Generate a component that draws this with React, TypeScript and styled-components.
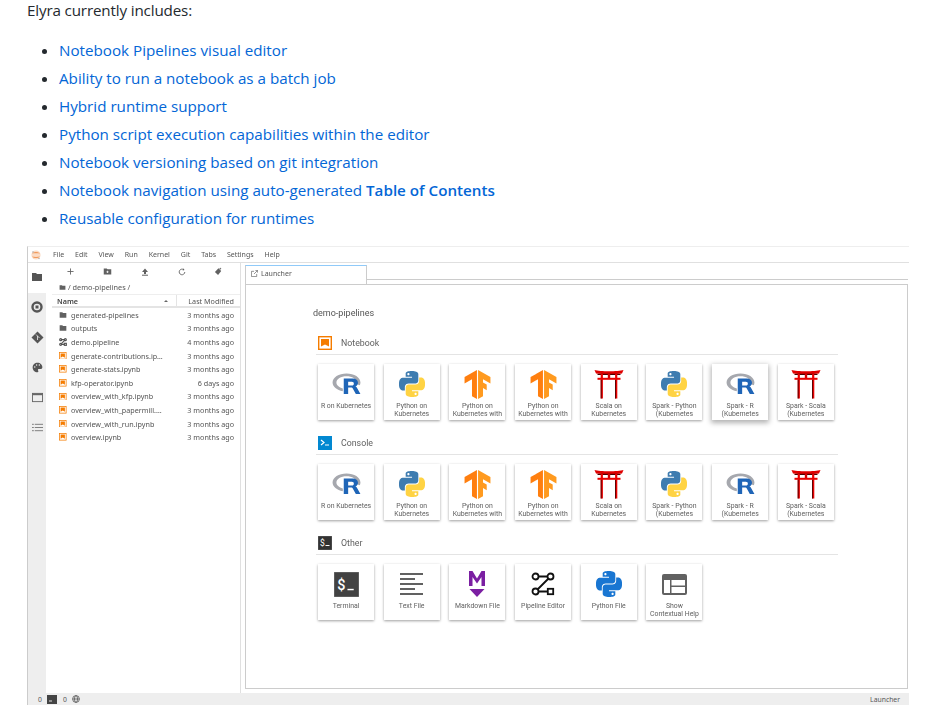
import React from "react";
import styled, { createGlobalStyle } from "styled-components";

const Global = createGlobalStyle`
  html, body { margin: 0; padding: 0; background: #fff; }
  body { font-family: "Open Sans", "Noto Sans", sans-serif; color: #24292e; }
`;

const Page = styled.div`
  width: 932px;
  height: 720px;
  overflow: hidden;
  padding-left: 27px;
  box-sizing: border-box;
`;
const Intro = styled.p`
  margin: 0 0 16px;
  font-size: 15.2px;
  line-height: 20px;
  letter-spacing: -0.15px;
  color: #24292e;
`;
const Features = styled.ul`
  margin: 0 0 14px;
  padding: 0 0 0 32px;
  list-style: disc;
  font-size: 15.2px;
`;
const Feature = styled.li`
  height: 28px;
  line-height: 28px;
  color: #24292e;
  a { color: #0366d6; text-decoration: none; }
  strong { font-weight: 600; }
`;

const Frame = styled.div`
  width: 882px;
  height: 459px;
  display: flex;
  flex-direction: column;
  border-top: 1px solid #eee;
  border-left: 1px solid #ccc;
  box-sizing: border-box;
  filter: blur(0.4px);
  font-family: "Noto Sans", sans-serif;
  color: #555;
`;
const MenuBar = styled.div`
  height: 15px;
  flex: none;
  display: flex;
  align-items: center;
  padding-left: 3px;
  border-bottom: 1px solid #e0e0e0;
  box-sizing: content-box;
  font-size: 7px;
`;
const MenuItems = styled.div`
  display: flex;
  gap: 10.9px;
  margin-left: 12px;
`;
const Body = styled.div`
  flex: 1;
  display: flex;
  min-height: 0;
`;
const SideBar = styled.div`
  width: 18px;
  flex: none;
  background: #eeeeee;
  display: flex;
  flex-direction: column;
`;
const SideButton = styled.div<{ $active?: boolean }>`
  height: 30px;
  box-sizing: border-box;
  padding-bottom: 2px;
  display: flex;
  align-items: center;
  justify-content: center;
  background: ${(p) => (p.$active ? "#fff" : "transparent")};
  color: #555;
`;
const Browser = styled.div`
  width: 195px;
  flex: none;
  border-right: 1px solid #e0e0e0;
  box-sizing: border-box;
  display: flex;
  flex-direction: column;
`;
const BrowserTools = styled.div`
  height: 17px;
  display: grid;
  grid-template-columns: repeat(5, 37px);
  padding-left: 6px;
  align-items: center;
  justify-items: center;
  flex: none;
  color: #616161;
`;
const Crumbs = styled.div`
  height: 14px;
  display: flex;
  align-items: center;
  gap: 2px;
  padding-left: 13px;
  font-size: 7.3px;
  flex: none;
`;
const HeadRow = styled.div`
  height: 14px;
  box-sizing: border-box;
  margin-left: 6px;
  display: flex;
  align-items: center;
  border-top: 1px solid #eee;
  border-bottom: 2px solid #e4e4e4;
  font-size: 7.2px;
  flex: none;
`;
const NameHead = styled.div`
  width: 125px;
  padding-left: 5px;
  box-sizing: border-box;
  font-weight: 600;
  color: #444;
  display: flex;
  align-items: center;
  justify-content: space-between;
  padding-right: 8px;
  border-right: 1px solid #e4e4e4;
  height: 100%;
`;
const DateHead = styled.div`
  flex: 1;
  text-align: right;
  padding-right: 6px;
`;
const Caret = styled.span`
  width: 0;
  height: 0;
  border-left: 2px solid transparent;
  border-right: 2px solid transparent;
  border-bottom: 2px solid #666;
`;
const Rows = styled.div`
  display: flex;
  flex-direction: column;
`;
const Row = styled.div`
  height: 13.6px;
  margin-left: 13px;
  display: flex;
  align-items: center;
  font-size: 7.2px;
`;
const RowIcon = styled.span`
  width: 12px;
  flex: none;
  display: flex;
  align-items: center;
`;
const RowName = styled.span`
  width: 92px;
  overflow: hidden;
  white-space: nowrap;
  text-overflow: ellipsis;
`;
const RowDate = styled.span`
  flex: 1;
  text-align: right;
  padding-right: 6px;
  white-space: nowrap;
`;
const Main = styled.div`
  flex: 1;
  display: flex;
  flex-direction: column;
  padding: 2px 1px 4px 4px;
  min-width: 0;
`;
const TabBar = styled.div`
  height: 19px;
  flex: none;
  display: flex;
`;
const Tab = styled.div`
  width: 122px;
  height: 19px;
  box-sizing: border-box;
  border-top: 1px solid #90caf9;
  border-left: 1px solid #ccc;
  border-right: 1px solid #ccc;
  display: flex;
  align-items: center;
  gap: 3px;
  padding: 0 0 4px 5px;
  font-size: 7px;
`;
const TabRest = styled.div`
  flex: 1;
  height: 14px;
  border-bottom: 1px solid #ccc;
`;
const Panel = styled.div`
  flex: 1;
  border: 1px solid #ccc;
  box-sizing: border-box;
  padding: 22px 0 0 67px;
  font-family: Roboto, sans-serif;
`;
const CwdTitle = styled.div`
  font-size: 9px;
  line-height: 12px;
  color: #555;
`;
const Section = styled.section`
  width: 522px;
  margin: 17px 0 16px 3px;
  & + & { margin-top: 0; }
`;
const SectionHead = styled.div`
  height: 14px;
  display: flex;
  align-items: center;
  gap: 9px;
  padding: 0 0 4px 2px;
  border-bottom: 1px solid #e4e4e4;
  font-size: 8.8px;
  color: #616161;
  box-sizing: content-box;
`;
const Cards = styled.div`
  display: flex;
  gap: 9.7px;
  padding: 9px 0 0 2px;
`;
const Card = styled.div<{ $hover?: boolean }>`
  width: 56px;
  height: 56px;
  flex: none;
  box-sizing: border-box;
  background: #fff;
  display: flex;
  flex-direction: column;
  align-items: center;
  overflow: hidden;
  box-shadow: ${(p) =>
    p.$hover
      ? "0 2px 5px 1px rgba(0,0,0,0.3)"
      : "0 1px 2.5px rgba(0,0,0,0.38)"};
`;
const CardIcon = styled.div`
  width: 32px;
  height: 32px;
  margin-top: 4px;
  flex: none;
  display: flex;
  align-items: center;
  justify-content: center;
`;
const CardLabel = styled.div`
  margin-top: 3px;
  width: 52px;
  font-size: 6.9px;
  line-height: 7.6px;
  text-align: center;
  color: #616161;
  white-space: pre-line;
`;
const Status = styled.div`
  height: 12px;
  flex: none;
  background: #eeeeee;
  display: flex;
  align-items: center;
  padding: 0 9px 0 10px;
  gap: 5.5px;
  font-size: 6.8px;
  color: #555;
`;
const StatusRight = styled.span`
  margin-left: auto;
`;

/* ---------- icons ---------- */
const PY_TOP =
  "M14.25.18l.9.2.73.26.59.3.45.32.34.34.25.34.16.33.1.3.04.26.02.2-.01.13V8.5l-.05.63-.13.55-.21.46-.26.38-.3.31-.33.25-.35.19-.35.14-.33.1-.3.07-.26.04-.21.02H8.77l-.69.05-.59.14-.5.22-.41.27-.33.32-.27.35-.2.36-.15.37-.1.35-.07.32-.04.27-.02.21v3.06H3.17l-.21-.03-.28-.07-.32-.12-.35-.18-.36-.26-.36-.36-.35-.46-.32-.59-.28-.73-.21-.88-.14-1.05-.05-1.23.06-1.22.16-1.04.24-.87.32-.71.36-.57.4-.44.42-.33.42-.24.4-.16.36-.1.32-.05.24-.01h.16l.06.01h8.16v-.83H6.18l-.01-2.75-.02-.37.05-.34.11-.31.17-.28.25-.26.31-.23.38-.2.44-.18.51-.15.58-.12.64-.1.71-.06.77-.04.84-.02 1.27.05zm-6.3 1.98l-.23.33-.08.41.08.41.23.34.33.22.41.09.41-.09.33-.22.23-.34.08-.41-.08-.41-.23-.33-.33-.22-.41-.09-.41.09z";
const PY_BOTTOM =
  "M21.04 6.11l.28.06.32.12.35.18.36.27.36.35.35.47.32.59.28.73.21.88.14 1.04.05 1.23-.06 1.23-.16 1.04-.24.86-.32.71-.36.57-.4.45-.42.33-.42.24-.4.16-.36.09-.32.05-.24.02-.16-.01h-8.22v.82h5.84l.01 2.76.02.36-.05.34-.11.31-.17.29-.25.25-.31.24-.38.2-.44.17-.51.15-.58.13-.64.09-.71.07-.77.04-.84.01-1.27-.04-1.07-.14-.9-.2-.73-.25-.59-.3-.45-.33-.34-.34-.25-.34-.16-.33-.1-.3-.04-.25-.02-.2.01-.13v-5.34l.05-.64.13-.54.21-.46.26-.38.3-.32.33-.24.35-.2.35-.14.33-.1.3-.06.26-.04.21-.02.13-.01h5.84l.69-.05.59-.14.5-.21.41-.28.33-.32.27-.35.2-.36.15-.36.1-.35.07-.32.04-.28.02-.21V6.07h2.09l.14.01zm-6.47 14.25l-.23.33-.08.41.08.41.23.33.33.23.41.08.41-.08.33-.23.23-.33.08-.41-.08-.41-.23-.33-.33-.23-.41-.08-.41.08z";

const PythonLogo = ({ mono }: { mono?: string }) => (
  <svg width="26" height="26" viewBox="0 0 24 24">
    <path d={PY_TOP} fill={mono || "#3e7cb0"} />
    <path d={PY_BOTTOM} fill={mono || "#ffd343"} />
  </svg>
);
const RLogo = () => (
  <svg width="29" height="22" viewBox="0 0 31 24">
    <path
      fillRule="evenodd"
      fill="#a6a8ae"
      d="M15.5.5C7 .5.3 4.8.3 10.3c0 4.6 4.7 8.4 11.2 9.5v-3c-4.2-1-7-3.5-7-6.4 0-4 4.900-6.900 11-6.900s11 2.900 11 6.900c0 .6-.1 1.200-.3 1.700l3.800 1.300c.4-.9.7-2 .7-3C30.700 4.800 24 .5 15.500.5z"
    />
    <path
      fillRule="evenodd"
      fill="#1f65b7"
      d="M12.500 6H22.500c3.400 0 5.500 1.800 5.500 4.500 0 2.100-1.100 3.400-2.900 4 1 .4 1.500 1 2.100 2l3.500 6.500H25.700l-3.200-5.900c-.6-1-1.100-1.300-2-1.300H17.300V23H12.500V6zM17.300 9.500V13.600h4c1.500 0 2.200-.7 2.200-2s-.7-2.100-2.200-2.100H17.300z"
    />
  </svg>
);
const TFLogo = () => (
  <svg width="29" height="29" viewBox="0 0 24 24">
    <path fill="#ff7f0f" d="M1.292 5.856L11.54 0v24l-4.095-2.378V7.603l-6.168 3.564.015-5.31z" />
    <path
      fill="#ff9a1f"
      d="M22.722 11.167l-.014-5.31L12.46 0v24l4.095-2.378V14.87l3.092 1.788-.018-4.618-3.074-1.77V7.603l6.168 3.564z"
    />
  </svg>
);
const Torii = () => (
  <svg width="30" height="30" viewBox="0 0 30 30">
    <path d="M0.500 1C6 2.700 24 2.700 29.500 1L28 4.500C22 5.500 8 5.500 2 4.500z" fill="#e00000" />
    <path d="M3.500 4.800h23V6h-23z" fill="#4a0000" />
    <rect x="3.500" y="8.800" width="23" height="2" fill="#e80000" />
    <rect x="13.800" y="5" width="2.400" height="4" fill="#d40000" />
    <rect x="6.700" y="5" width="2.200" height="24.500" fill="#e80000" />
    <rect x="21.100" y="5" width="2.200" height="24.500" fill="#e80000" />
    <rect x="6.700" y="11" width=".9" height="18.500" fill="#500000" />
    <rect x="21.100" y="11" width=".9" height="18.500" fill="#500000" />
  </svg>
);
const TerminalLogo = () => (
  <svg width="25" height="25" viewBox="0 0 26 26">
    <rect width="26" height="26" fill="#424242" stroke="#888" strokeWidth="0.8" />
    <text x="3.500" y="19" fontSize="15" fontFamily="Roboto, sans-serif" fontWeight="500" fill="#fff">$</text>
    <rect x="14" y="17.500" width="6.500" height="1.500" fill="#fff" />
  </svg>
);
const TextLogo = () => (
  <svg width="24" height="24" viewBox="0 0 24 24" fill="#616161">
    <rect y="1" width="23" height="2" />
    <rect y="6" width="15" height="2" />
    <rect y="11" width="23" height="2" />
    <rect y="16" width="15" height="2" />
    <rect y="21" width="23" height="2" />
  </svg>
);
const MarkdownLogo = () => (
  <svg width="18" height="28" viewBox="0 0 18 28" fill="#7b1fa2">
    <path d="M1 1h3.500L9 8.500 13.500 1H17v15h-3.500V7L9 13.500 4.500 7v9H1z" />
    <path d="M1.500 19h15L9 27z" />
  </svg>
);
const PipelineLogo = () => (
  <svg width="24" height="24" viewBox="0 0 24 24" fill="none" stroke="#111" strokeWidth="1.800">
    <circle cx="4.500" cy="4.500" r="3" />
    <circle cx="19.500" cy="4.500" r="3" />
    <circle cx="4.500" cy="19.500" r="3" />
    <rect x="16.800" y="16.800" width="5.400" height="5.400" />
    <path d="M7.500 4.500h9M17.500 6.500L6.500 17.500M7.500 19.500h9.300" />
  </svg>
);
const HelpLogo = () => (
  <svg width="25" height="21" viewBox="0 0 25 21">
    <rect width="25" height="21" rx="2" fill="#616161" />
    <rect x="2" y="6" width="6" height="13" fill="#fff" />
    <rect x="9.500" y="6" width="13.500" height="5.500" fill="#fff" />
    <rect x="9.500" y="13" width="13.500" height="6" fill="#fff" />
  </svg>
);
const NotebookSquare = ({ size = 14 }: { size?: number }) => (
  <svg width={size} height={size} viewBox="0 0 14 14">
    <rect x=".7" y=".7" width="12.600" height="12.600" fill="#fff" stroke="#f57c00" strokeWidth="1.400" />
    <path d="M3 3h8v7.500L7 8.500 3 10.500z" fill="#f57c00" />
  </svg>
);
const ConsoleSquare = () => (
  <svg width="14" height="14" viewBox="0 0 14 14">
    <rect width="14" height="14" fill="#0288d1" />
    <path d="M3 4l3 2.500L3 9" stroke="#fff" strokeWidth="1.200" fill="none" />
    <rect x="7" y="8.500" width="4" height="1" fill="#fff" />
  </svg>
);
const OtherSquare = () => (
  <svg width="14" height="14" viewBox="0 0 14 14">
    <rect width="14" height="14" fill="#333" stroke="#888" strokeWidth=".5" />
    <text x="2" y="10" fontSize="8.500" fontFamily="Roboto, sans-serif" fill="#fff">$</text>
    <rect x="7.500" y="9" width="4" height="1" fill="#fff" />
  </svg>
);
const FolderIcon = ({ size = 8, color = "#616161" }: { size?: number; color?: string }) => (
  <svg width={size} height={size} viewBox="0 0 24 24" fill={color}>
    <path d="M10 4H2v16h20V6H12z" />
  </svg>
);
const PipelineSmall = () => (
  <svg width="8" height="8" viewBox="0 0 24 24" fill="none" stroke="#555" strokeWidth="3.500">
    <circle cx="5" cy="5" r="3" />
    <circle cx="19" cy="5" r="3" />
    <circle cx="5" cy="19" r="3" />
    <rect x="16" y="16" width="6" height="6" />
    <path d="M8 5h8M17 7L7 17M8 19h8" />
  </svg>
);
const Jupyter = () => (
  <svg width="10" height="10" viewBox="0 0 10 10">
    <circle cx="5" cy="5" r="4.600" fill="#fbdcc6" />
    <path d="M1 3.500C3 1.500 7 1.500 9 3.500 7 3 3 3 1 3.500zM1 6.500c2 2 6 2 8 0C7 7 3 7 1 6.500z" fill="#f09a5c" />
    <circle cx="2" cy="2" r=".8" fill="#aaa" />
    <circle cx="8" cy="8.500" r=".7" fill="#aaa" />
  </svg>
);

const sideIcons = [
  <FolderIcon key="a" size={12} color="#555" />,
  <svg key="b" width="12" height="12" viewBox="0 0 12 12">
    <circle cx="6" cy="6" r="4.500" fill="none" stroke="#555" strokeWidth="2.400" />
    <rect x="4.500" y="4.500" width="3" height="3" fill="#555" />
  </svg>,
  <svg key="c" width="13" height="13" viewBox="0 0 13 13">
    <path d="M6.500.5l6 6-6 6-6-6z" fill="#555" />
    <path d="M5 3.500l3.500 3.500M6.500 5v4" stroke="#eee" strokeWidth=".8" />
  </svg>,
  <svg key="d" width="11" height="11" viewBox="0 0 12 12">
    <path d="M6 .8C3 .8.700 3 .700 6c0 2.900 2.300 5.200 5.300 5.200.6 0 1-.4 1-1 0-.8-.7-1-.5-1.800.2-.6.800-.7 1.500-.7h1.300c1.200 0 2-.9 2-2C11.300 2.800 8.900.8 6 .8z" fill="#555" />
    <circle cx="3" cy="5.500" r=".8" fill="#eee" />
    <circle cx="5" cy="3.200" r=".8" fill="#eee" />
    <circle cx="8" cy="3.200" r=".8" fill="#eee" />
  </svg>,
  <svg key="e" width="11" height="11" viewBox="0 0 12 12">
    <rect x=".5" y="1.500" width="11" height="9" fill="none" stroke="#666" strokeWidth="1" />
    <rect x=".5" y="1.500" width="11" height="2" fill="#666" />
  </svg>,
  <svg key="f" width="11" height="11" viewBox="0 0 12 12" fill="#777">
    <rect x="3" y="2" width="9" height="1" />
    <rect x="3" y="5.500" width="9" height="1" />
    <rect x="3" y="9" width="9" height="1" />
    <rect x="0" y="2" width="2" height="1" />
    <rect x="0" y="5.500" width="2" height="1" />
    <rect x="0" y="9" width="2" height="1" />
  </svg>,
];

const toolIcons = [
  <svg key="plus" width="7" height="7" viewBox="0 0 8 8"><path d="M4 .5v7M.5 4h7" stroke="#616161" strokeWidth="1" /></svg>,
  <svg key="nf" width="9" height="9" viewBox="0 0 24 24">
    <path d="M10 4H2v16h20V6H12z" fill="#616161" />
    <path d="M12 10v6M9 13h6" stroke="#fff" strokeWidth="2" />
  </svg>,
  <svg key="up" width="8" height="8" viewBox="0 0 8 8" fill="#616161">
    <path d="M4 .5L7 4H5v2H3V4H1z" />
    <rect x="1" y="6.700" width="6" height="1" />
  </svg>,
  <svg key="re" width="8" height="8" viewBox="0 0 8 8" fill="none" stroke="#616161" strokeWidth=".9">
    <path d="M6.800 4A2.800 2.800 0 1 1 5.800 1.800" />
    <path d="M5.300.3L6.500 2 4.700 2.500" fill="#616161" stroke="none" />
  </svg>,
  <svg key="git" width="9" height="9" viewBox="0 0 10 10" fill="#616161">
    <path d="M1 5.500L5 1.500 8 4.500 4.500 9z" />
    <path d="M7 .5l.4 1 1 .4-1 .4-.4 1-.4-1-1-.4 1-.4z" />
  </svg>,
];

const files: [string, string, "folder" | "pipe" | "nb"][] = [
  ["generated-pipelines", "3 months ago", "folder"],
  ["outputs", "3 months ago", "folder"],
  ["demo.pipeline", "4 months ago", "pipe"],
  ["generate-contributions.ipynb", "3 months ago", "nb"],
  ["generate-stats.ipynb", "3 months ago", "nb"],
  ["kfp-operator.ipynb", "6 days ago", "nb"],
  ["overview_with_kfp.ipynb", "3 months ago", "nb"],
  ["overview_with_papermill.ipynb", "3 months ago", "nb"],
  ["overview_with_run.ipynb", "3 months ago", "nb"],
  ["overview.ipynb", "3 months ago", "nb"],
];

const kernels = (hoverIndex: number) =>
  [
    ["R on Kubernetes", <RLogo />],
    ["Python on\nKubernetes", <PythonLogo />],
    ["Python on\nKubernetes with", <TFLogo />],
    ["Python on\nKubernetes with", <TFLogo />],
    ["Scala on\nKubernetes", <Torii />],
    ["Spark - Python\n(Kubernetes", <PythonLogo />],
    ["Spark - R\n(Kubernetes", <RLogo />],
    ["Spark - Scala\n(Kubernetes", <Torii />],
  ].map(([label, icon], i) => ({ label: label as string, icon, hover: i === hoverIndex }));

const others = [
  { label: "Terminal", icon: <TerminalLogo />, hover: false },
  { label: "Text File", icon: <TextLogo />, hover: false },
  { label: "Markdown File", icon: <MarkdownLogo />, hover: false },
  { label: "Pipeline Editor", icon: <PipelineLogo />, hover: false },
  { label: "Python File", icon: <PythonLogo mono="#1976d2" />, hover: false },
  { label: "Show\nContextual Help", icon: <HelpLogo />, hover: false },
];

const sections = [
  { title: "Notebook", icon: <NotebookSquare />, cards: kernels(6) },
  { title: "Console", icon: <ConsoleSquare />, cards: kernels(-1) },
  { title: "Other", icon: <OtherSquare />, cards: others },
];

const features = [
  "Notebook Pipelines visual editor",
  "Ability to run a notebook as a batch job",
  "Hybrid runtime support",
  "Python script execution capabilities within the editor",
  "Notebook versioning based on git integration",
];

export default function App() {
  return (
    <Page>
      <Global />
      <Intro>Elyra currently includes:</Intro>
      <Features>
        {features.map((f) => (
          <Feature key={f}>
            <a href="#">{f}</a>
          </Feature>
        ))}
        <Feature>
          <a href="#">
            Notebook navigation using auto-generated <strong>Table of Contents</strong>
          </a>
        </Feature>
        <Feature>
          <a href="#">Reusable configuration for runtimes</a>
        </Feature>
      </Features>
      <Frame>
        <MenuBar>
          <Jupyter />
          <MenuItems>
            {["File", "Edit", "View", "Run", "Kernel", "Git", "Tabs", "Settings", "Help"].map((m) => (
              <span key={m}>{m}</span>
            ))}
          </MenuItems>
        </MenuBar>
        <Body>
          <SideBar>
            {sideIcons.map((icon, i) => (
              <SideButton key={i} $active={i === 0}>
                {icon}
              </SideButton>
            ))}
          </SideBar>
          <Browser>
            <BrowserTools>{toolIcons}</BrowserTools>
            <Crumbs>
              <FolderIcon size={7} />
              <span>/ demo-pipelines /</span>
            </Crumbs>
            <HeadRow>
              <NameHead>
                Name
                <Caret />
              </NameHead>
              <DateHead>Last Modified</DateHead>
            </HeadRow>
            <Rows>
              {files.map(([name, date, kind]) => (
                <Row key={name}>
                  <RowIcon>
                    {kind === "folder" ? <FolderIcon /> : kind === "pipe" ? <PipelineSmall /> : <NotebookSquare size={7.5} />}
                  </RowIcon>
                  <RowName>{name}</RowName>
                  <RowDate>{date}</RowDate>
                </Row>
              ))}
            </Rows>
          </Browser>
          <Main>
            <TabBar>
              <Tab>
                <svg width="7" height="7" viewBox="0 0 8 8" fill="none" stroke="#666" strokeWidth=".8">
                  <path d="M6.500 4.500v3h-6v-6h3M3.500 4.500L7.500.5M5 .5h2.500V3" />
                </svg>
                Launcher
              </Tab>
              <TabRest />
            </TabBar>
            <Panel>
              <CwdTitle>demo-pipelines</CwdTitle>
              {sections.map((s) => (
                <Section key={s.title}>
                  <SectionHead>
                    {s.icon}
                    <span>{s.title}</span>
                  </SectionHead>
                  <Cards>
                    {s.cards.map((c, i) => (
                      <Card key={i} $hover={c.hover}>
                        <CardIcon>{c.icon}</CardIcon>
                        <CardLabel>{c.label}</CardLabel>
                      </Card>
                    ))}
                  </Cards>
                </Section>
              ))}
            </Panel>
          </Main>
        </Body>
        <Status>
          <span>0</span>
          <svg width="10" height="9" viewBox="0 0 10 9">
            <rect width="10" height="9" fill="#444" />
            <rect x="2" y="5.500" width="3" height="1" fill="#ddd" />
          </svg>
          <span>0</span>
          <svg width="8" height="8" viewBox="0 0 8 8" fill="none" stroke="#555" strokeWidth=".8">
            <circle cx="4" cy="4" r="3.400" />
            <ellipse cx="4" cy="4" rx="1.500" ry="3.400" />
            <path d="M.6 4h6.800" />
          </svg>
          <StatusRight>Launcher</StatusRight>
        </Status>
      </Frame>
    </Page>
  );
}
